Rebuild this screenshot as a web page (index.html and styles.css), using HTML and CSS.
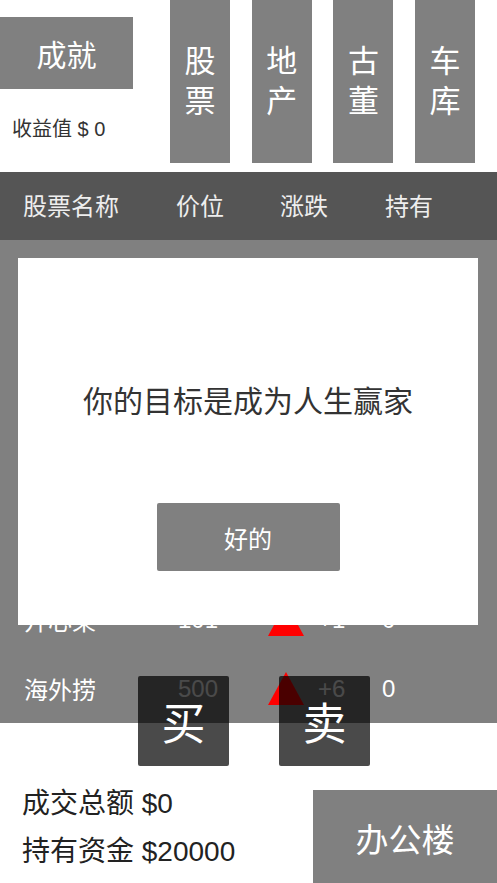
FILE: index.html
```html
<!DOCTYPE html>
<html lang="zh">
<head>
<meta charset="utf-8">
<title>人生赢家</title>
<link rel="stylesheet" href="styles.css">
</head>
<body>
<div class="screen">
  <section class="top">
    <div class="top-left">
      <div class="achv">成就</div>
      <div class="income">收益值 $ 0</div>
    </div>
    <div class="tabs">
      <div class="tab">股<br>票</div>
      <div class="tab">地<br>产</div>
      <div class="tab">古<br>董</div>
      <div class="tab">车<br>库</div>
    </div>
  </section>

  <div class="thead">
    <span>股票名称</span><span>价位</span><span>涨跌</span><span>持有</span>
  </div>

  <div class="list">
    <div class="row"><span>阿里爸</span><span>320</span><span class="tri"></span><span>+2</span><span>0</span></div>
    <div class="row"><span>腾讯云</span><span>280</span><span class="tri"></span><span>+3</span><span>0</span></div>
    <div class="row"><span>百读</span><span>150</span><span class="tri"></span><span>+1</span><span>0</span></div>
    <div class="row"><span>京西</span><span>90</span><span class="tri"></span><span>+4</span><span>0</span></div>
    <div class="row"><span>美味团</span><span>210</span><span class="tri"></span><span>+5</span><span>0</span></div>
    <div class="row"><span>开心果</span><span>101</span><span class="tri"></span><span>+1</span><span>0</span></div>
    <div class="row"><span>海外捞</span><span>500</span><span class="tri"></span><span>+6</span><span>0</span></div>
  </div>

  <section class="bottom">
    <div class="totals">
      <div>成交总额 $0</div>
      <div>持有资金 $20000</div>
    </div>
    <div class="office">办公楼</div>
  </section>

  <div class="trade">
    <div class="trade-btn">买</div>
    <div class="trade-btn">卖</div>
  </div>

  <div class="modal">
    <div class="modal-title">你的目标是成为人生赢家</div>
    <div class="ok">好的</div>
  </div>
</div>
</body>
</html>
```

FILE: styles.css
```css
html, body {
  margin: 0;
  padding: 0;
  background: #fff;
}
body {
  font-family: "Liberation Sans", "Noto Sans CJK SC", sans-serif;
  color: #333;
}
.screen {
  position: relative;
  width: 497px;
  height: 883px;
  overflow: hidden;
}

/* top area */
.top {
  display: flex;
  height: 172px;
}
.top-left {
  width: 170px;
  flex: none;
}
.achv {
  margin-top: 17px;
  width: 133px;
  height: 72px;
  background: #808080;
  color: #fff;
  font-size: 30px;
  display: flex;
  align-items: center;
  justify-content: center;
}
.income {
  margin-top: 26px;
  padding-left: 12px;
  font-size: 20px;
  line-height: 28px;
  color: #333;
}
.tabs {
  display: flex;
  gap: 21.7px;
}
.tab {
  width: 60px;
  height: 163px;
  background: #808080;
  color: #fff;
  font-size: 31px;
  line-height: 40px;
  text-align: center;
  display: flex;
  align-items: center;
  justify-content: center;
}

/* table header */
.thead {
  height: 68px;
  background: #555;
  color: #eee;
  font-size: 24px;
  display: grid;
  grid-template-columns: 153px 104px 105px 1fr;
  align-items: center;
  padding-left: 23px;
  padding-bottom: 3px;
  box-sizing: border-box;
}

/* list */
.list {
  background: #808080;
  height: 483px;
}
.row {
  height: 69px;
  display: grid;
  grid-template-columns: 154px 90px 50px 64px 1fr;
  align-items: center;
  padding-left: 24px;
  color: #fff;
  font-size: 24px;
}
.tri {
  width: 0;
  height: 0;
  border-left: 18.5px solid transparent;
  border-right: 18.5px solid transparent;
  border-bottom: 33px solid #f00;
}

/* bottom */
.bottom {
  display: flex;
  justify-content: space-between;
}
.totals {
  margin-top: 57px;
  padding-left: 22px;
  font-size: 28px;
  line-height: 48px;
  color: #222;
}
.office {
  margin-top: 67px;
  width: 184px;
  height: 96px;
  background: #808080;
  color: #fff;
  font-size: 33px;
  display: flex;
  align-items: center;
  justify-content: center;
}

/* buy / sell buttons over the list */
.trade {
  position: absolute;
  left: 138px;
  top: 676px;
  display: flex;
  gap: 50px;
}
.trade-btn {
  width: 91px;
  height: 90px;
  background: rgba(0, 0, 0, 0.71);
  border-radius: 2px;
  color: #fff;
  font-size: 44px;
  display: flex;
  align-items: center;
  justify-content: center;
}

/* modal dialog */
.modal {
  position: absolute;
  left: 18px;
  top: 258px;
  width: 460px;
  height: 367px;
  background: #fff;
  display: flex;
  flex-direction: column;
  align-items: center;
}
.modal-title {
  margin-top: 123px;
  font-size: 30px;
  line-height: 42px;
  color: #333;
}
.ok {
  margin-top: 80px;
  width: 183px;
  height: 68px;
  background: #808080;
  border-radius: 2px;
  color: #fff;
  font-size: 24px;
  display: flex;
  align-items: center;
  justify-content: center;
}
```
